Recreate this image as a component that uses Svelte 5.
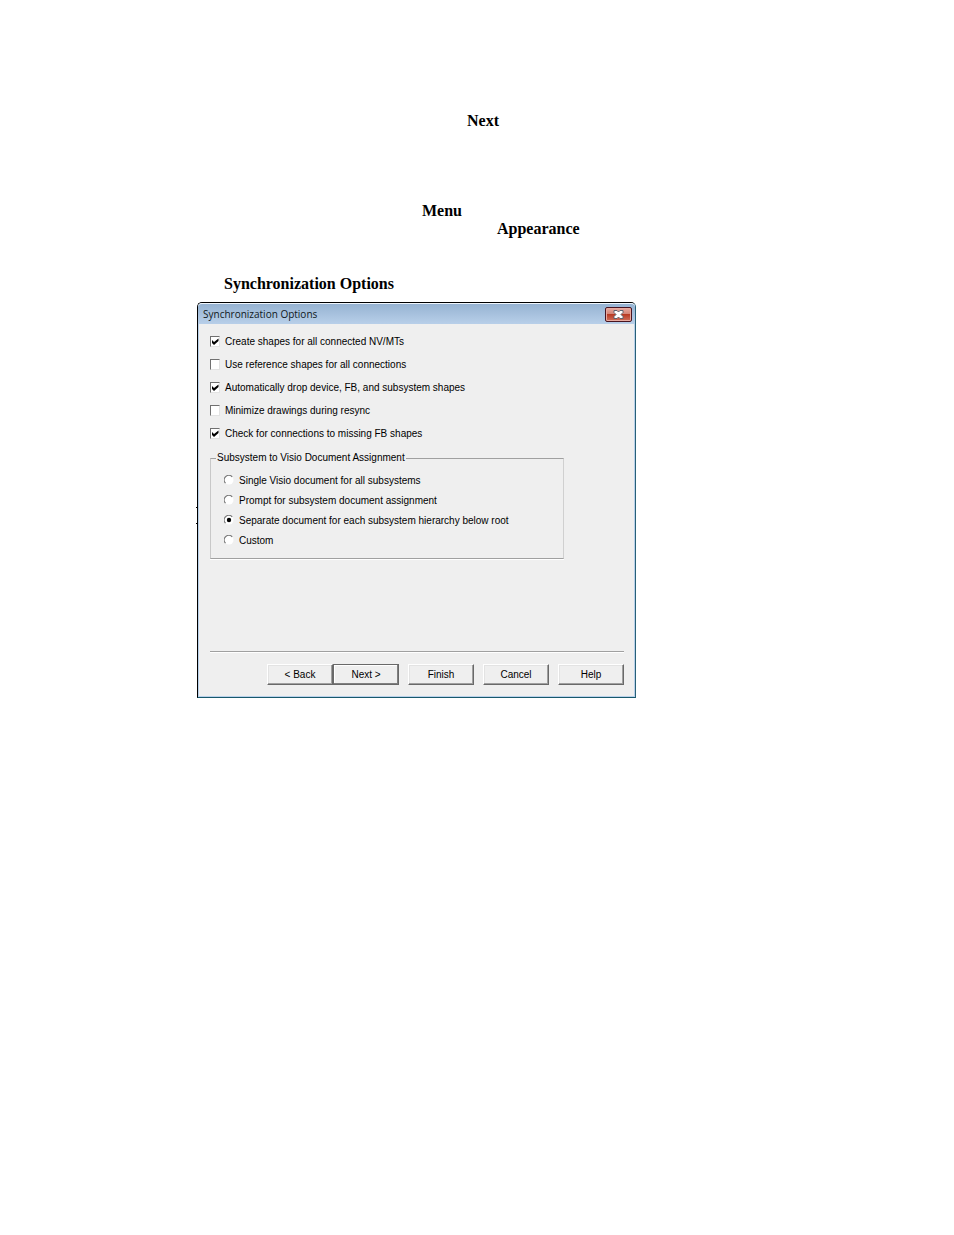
<script>
  let options = $state([
    { id: 'create', label: 'Create shapes for all connected NV/MTs', checked: true },
    { id: 'reference', label: 'Use reference shapes for all connections', checked: false },
    { id: 'drop', label: 'Automatically drop device, FB, and subsystem shapes', checked: true },
    { id: 'minimize', label: 'Minimize drawings during resync', checked: false },
    { id: 'missing', label: 'Check for connections to missing FB shapes', checked: true }
  ]);
  const assignments = [
    { id: 'single', label: 'Single Visio document for all subsystems' },
    { id: 'prompt', label: 'Prompt for subsystem document assignment' },
    { id: 'separate', label: 'Separate document for each subsystem hierarchy below root' },
    { id: 'custom', label: 'Custom' }
  ];
  let assignment = $state('separate');
</script>

<main>
  <p class="next"><strong>Next</strong></p>
  <p class="menu"><strong>Menu</strong></p>
  <p class="appearance"><strong>Appearance</strong></p>
  <h1>Synchronization Options</h1>

  <section class="dialog" aria-labelledby="dialog-title">
    <span class="tick upper"></span>
    <span class="tick lower"></span>
    <header>
      <h2 id="dialog-title">Synchronization Options</h2>
      <button class="close" type="button" aria-label="Close">
        <svg width="11" height="9" viewBox="0 0 11 9" aria-hidden="true">
          <path d="M1 .5h3l1.500 1.500L7 .5h3v2L8 4.500l2 2v2H7L5.500 7 4 8.500H1v-2l2-2-2-2z" fill="#fff" stroke="#5c6470" stroke-width="1" />
        </svg>
      </button>
    </header>

    <form onsubmit={(e) => e.preventDefault()}>
      <div class="options">
        {#each options as option (option.id)}
          <label class="option" for={option.id}>
            <span class="control">
              <input id={option.id} type="checkbox" bind:checked={option.checked} />
              {#if option.checked}
                <svg width="10" height="11" viewBox="0 0 10 11" aria-hidden="true">
                  <path d="M2 4v3l2 2 4.500-4V2.500L4 6z" fill="#000" />
                </svg>
              {/if}
            </span>
            <span>{option.label}</span>
          </label>
        {/each}
      </div>

      <fieldset>
        <legend>Subsystem to Visio Document Assignment</legend>
        {#each assignments as item (item.id)}
          <label class="option" for={item.id}>
            <span class="control">
              <input id={item.id} type="radio" name="assignment" value={item.id} bind:group={assignment} />
              <svg width="10" height="11" viewBox="0 0 10 11" aria-hidden="true">
                <circle cx="5" cy="5" r="4.500" fill="#fff" />
                <path d="M1.500 8.200A4.300 4.300 0 0 1 8.200 1.800" fill="none" stroke="#777" stroke-width="1.200" />
                {#if assignment === item.id}
                  <circle cx="5" cy="5" r="2.200" fill="#000" />
                {/if}
              </svg>
            </span>
            <span>{item.label}</span>
          </label>
        {/each}
      </fieldset>

      <footer>
        <div class="pair">
          <button type="button">&lt; Back</button>
          <button type="submit" class="default">Next &gt;</button>
        </div>
        <button type="button">Finish</button>
        <button type="button">Cancel</button>
        <button type="button">Help</button>
      </footer>
    </form>
  </section>
</main>

<style>
  :global(body) {
    margin: 0;
    background: #fff;
  }

  main {
    box-sizing: border-box;
    padding: 112px 24px 48px 197px;
    color: #000;
    font-family: 'Liberation Serif', serif;
    font-size: 16px;
    line-height: 18px;
  }

  p,
  h1 {
    margin: 0;
    font-size: 16px;
    font-weight: bold;
    line-height: 18px;
  }

  .next {
    padding-left: 270px;
  }

  .menu {
    margin-top: 72px;
    padding-left: 225px;
  }

  .appearance {
    padding-left: 300px;
  }

  h1 {
    margin: 37px 0 9px;
    padding-left: 27px;
  }

  .dialog {
    position: relative;
    box-sizing: border-box;
    max-width: 439px;
    border: 1px solid #000;
    border-right-color: #286078;
    border-bottom-color: #18586c;
    border-radius: 5px 5px 0 0;
    background: #b9d1ea;
    font-family: 'Liberation Sans', sans-serif;
    font-size: 10px;
    line-height: 12px;
  }

  .tick {
    position: absolute;
    left: -2px;
    width: 1px;
    height: 1px;
    background: #000;
  }

  .upper {
    top: 204px;
  }

  .lower {
    top: 220px;
  }

  header {
    display: flex;
    align-items: center;
    justify-content: space-between;
    height: 20px;
    padding: 0 3px 0 5px;
    border-top: 1px solid #eef5fc;
    border-radius: 4px 4px 0 0;
    background: linear-gradient(#96b3d2, #b8cfe9);
  }

  h2 {
    margin: 0;
    color: #101820;
    font-family: 'Open Sans', sans-serif;
    font-size: 10px;
    font-weight: normal;
    line-height: 16px;
  }

  button {
    box-sizing: border-box;
    width: 66px;
    height: 21px;
    padding: 0;
    border: 1px solid;
    border-color: #fff #696969 #696969 #fff;
    background: #efefef;
    box-shadow: inset -1px -1px #a0a0a0, inset 1px 1px #e3e3e3;
    color: #000;
    font: inherit;
  }

  .close {
    display: grid;
    place-items: center;
    width: 27px;
    height: 15px;
    border: 1px solid #481420;
    border-radius: 2px;
    background: linear-gradient(#e9aba2, #d48577 45%, #b93b24 50%, #d0705c);
    box-shadow: inset 0 0 0 1px #e8aaa0;
  }

  form {
    margin: 0 1px 1px;
    padding: 12px 10px 11px 11px;
    background: #efefef;
  }

  .options {
    display: grid;
    gap: 12px;
  }

  .option {
    display: flex;
    align-items: center;
    gap: 5px;
    line-height: 11px;
  }

  .control {
    display: grid;
    flex: none;
  }

  .control > * {
    grid-area: 1 / 1;
  }

  .control svg {
    pointer-events: none;
  }

  input {
    appearance: none;
    box-sizing: border-box;
    width: 10px;
    height: 11px;
    margin: 0;
  }

  input[type='checkbox'] {
    border: 1px solid;
    border-color: #707070 #e3e3e3 #e3e3e3 #707070;
    background: #fff;
  }

  fieldset {
    display: grid;
    gap: 9px;
    max-width: 354px;
    box-sizing: border-box;
    min-width: 0;
    margin: 13px 0 0;
    padding: 11px 13px 12px;
    border: 1px solid;
    border-color: #a0a0a0 #d0d0d0 #a0a0a0 #c8c8c8;
    box-shadow: 0 1px #fff;
  }

  legend {
    margin-left: -8px;
    padding: 0 1px;
  }

  footer {
    display: flex;
    justify-content: flex-end;
    gap: 9px;
    margin-top: 92px;
    padding-top: 12px;
    border-top: 1px solid #a0a0a0;
    box-shadow: inset 0 1px #fff;
  }

  .pair {
    display: flex;
  }

  .default {
    border-color: #696969;
    box-shadow: inset -1px -1px #808080, inset 1px 1px #fff;
  }
</style>
